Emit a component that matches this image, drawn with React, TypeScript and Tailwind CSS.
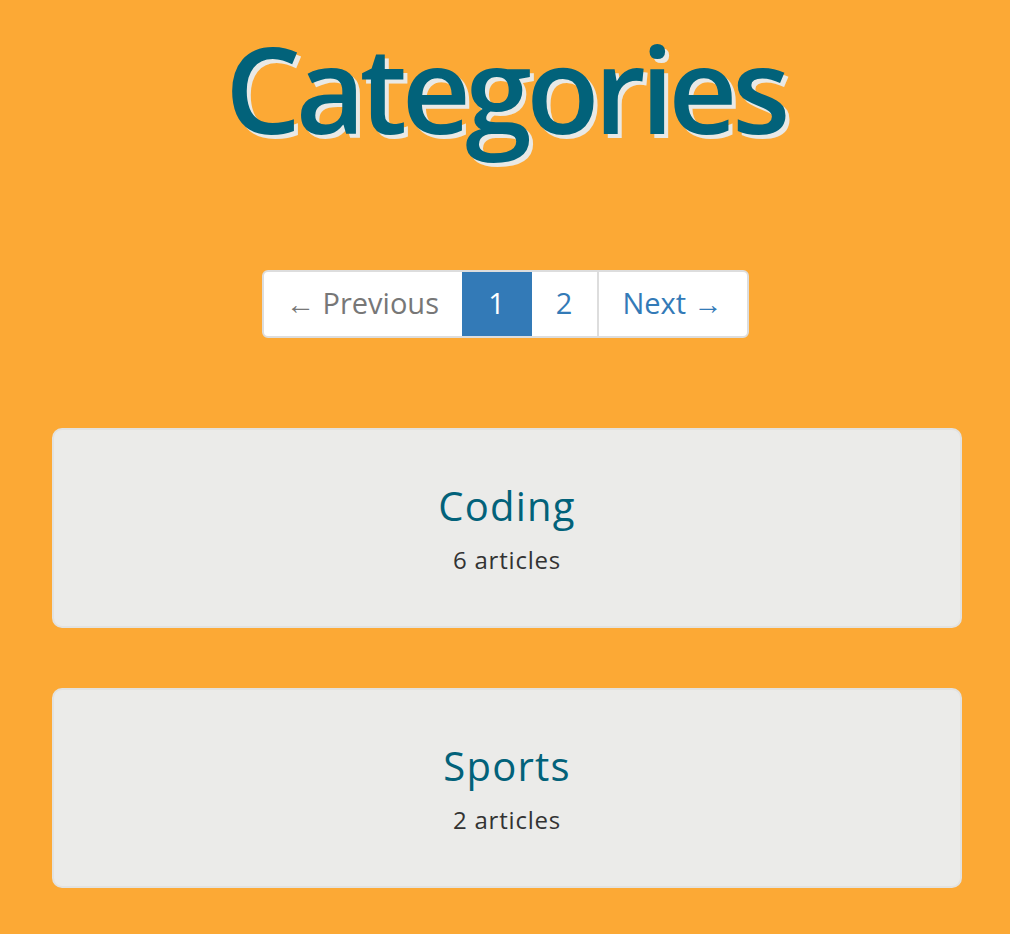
const categories = [
  { name: "Coding", count: 6 },
  { name: "Sports", count: 2 },
];

export default function App() {
  return (
    <div className="min-h-[934px] bg-[#fca935] font-['Open_Sans',sans-serif]">
      <div className="flex justify-center pt-[14px]">
        <h1 className="text-[120px] leading-[148px] font-semibold tracking-[-5.5px] text-[#02627a] [text-shadow:4px_4px_0_#e9e9e6]">
          Categories
        </h1>
      </div>

      <div className="flex justify-center pt-[108px]">
        <nav className="flex h-[68px] rounded-[6px] border-2 border-[#dddddd] bg-white text-[29px] overflow-hidden">
          <span className="flex w-[198px] items-center justify-center pb-[3px] text-[#777777]">← Previous</span>
          <span className="flex w-[70px] items-center justify-center pb-[3px] bg-[#337ab7] text-white">1</span>
          <span className="flex w-[67px] items-center justify-center pb-[3px] border-r-2 border-[#dddddd] text-[#337ab7]">2</span>
          <span className="flex w-[148px] items-center justify-center pb-[3px] text-[#337ab7]">Next →</span>
        </nav>
      </div>

      <div className="flex flex-col gap-[60px] pl-[52px] pr-[48px] pt-[90px] pb-[46px]">
        {categories.map((c) => (
          <div
            key={c.name}
            className="flex h-[200px] flex-col items-center justify-center rounded-[10px] border-2 border-[#e2e2e0] bg-[#ebebe9]"
          >
            <h2 className="text-[40px] leading-[50px] tracking-[1.2px] text-[#02627a]">{c.name}</h2>
            <p className="mt-[14px] text-[24px] leading-[30px] tracking-[0.8px] text-[#333333]">{c.count} articles</p>
          </div>
        ))}
      </div>
    </div>
  );
}
